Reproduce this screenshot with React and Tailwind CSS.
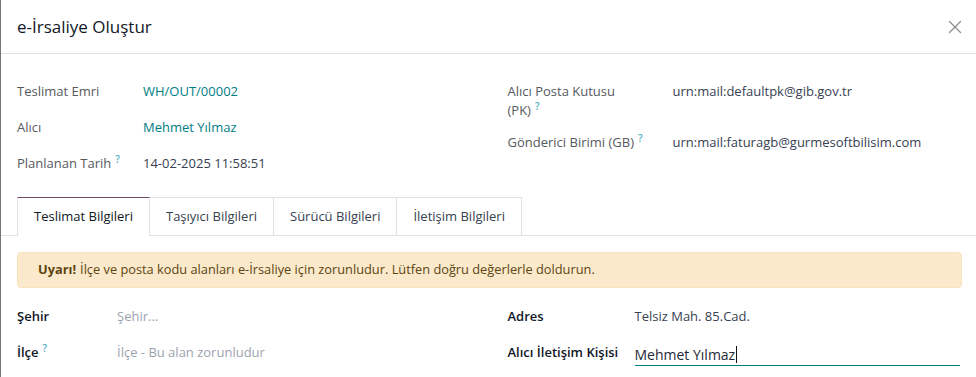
import { X } from "lucide-react"

const font = { fontFamily: '"Open Sans", "Noto Sans", sans-serif' }

function Help() {
    return <span className="relative -top-[5px] ml-[4px] text-[10px] leading-none font-semibold text-[#4fb0c0]">?</span>
}

function TopRow({ label, value, help, link, labelW }) {
    return (
        <div className="flex py-2 leading-[20px]">
            <div className={`${labelW} shrink-0 text-[#555a60]`}>
                {label}
                {help && <Help />}
            </div>
            <div className={link ? "text-[#017e84]" : "text-[#374151]"}>{value}</div>
        </div>
    )
}

const tabs = ["Teslimat Bilgileri", "Taşıyıcı Bilgileri", "Sürücü Bilgileri", "İletişim Bilgileri"]

export default function App() {
    return (
        <div className="h-[377px] w-full overflow-hidden border-l border-[#767676] bg-white text-[13px] text-[#374151]" style={font}>
            {/* Header */}
            <div className="flex h-[54px] items-center justify-between border-b border-[#dee2e6] pl-4 pr-[10px]">
                <h4 className="text-[17px] text-[#111827]">e-İrsaliye Oluştur</h4>
                <X size={22} strokeWidth={1.3} className="text-[#8a8a8a]" />
            </div>

            {/* Top fields */}
            <div className="grid grid-cols-2 gap-x-[38px] px-4 pt-[19px]">
                <div>
                    <TopRow label="Teslimat Emri" value="WH/OUT/00002" link labelW="w-[126px]" />
                    <TopRow label="Alıcı" value="Mehmet Yılmaz" link labelW="w-[126px]" />
                    <TopRow label="Planlanan Tarih" value="14-02-2025 11:58:51" help labelW="w-[126px]" />
                </div>
                <div>
                    <div className="flex pt-2 pb-1 leading-[20px]">
                        <div className="w-[165px] shrink-0 text-[#555a60]">
                            <div className="h-[19px]">Alıcı Posta Kutusu</div>
                            <div className="h-[20px]">
                                (PK)
                                <Help />
                            </div>
                        </div>
                        <div>urn:mail:defaultpk@gib.gov.tr</div>
                    </div>
                    <TopRow label="Gönderici Birimi (GB)" value="urn:mail:faturagb@gurmesoftbilisim.com" help labelW="w-[165px]" />
                </div>
            </div>

            {/* Tabs */}
            <div className="mt-4 flex border-b border-[#dee2e6] pl-4">
                {tabs.map((t, i) => (
                    <div
                        key={t}
                        className={
                            i === 0
                                ? "-mb-px flex h-[39px] items-center border-x border-t border-t-[#714b67] border-x-[#dee2e6] bg-white px-4 text-[#111827]"
                                : "flex h-[38px] items-center border-t border-r border-[#dee2e6] px-4 text-[#374151]"
                        }
                    >
                        {t}
                    </div>
                ))}
            </div>

            {/* Warning */}
            <div className="ml-4 mr-[14px] mt-4 flex h-9 items-center rounded border border-[#f9e3bd] bg-[#fbe9cc] px-5 text-[12.8px] text-[#5b4510]">
                <b className="mr-1">Uyarı!</b> İlçe ve posta kodu alanları e-İrsaliye için zorunludur. Lütfen doğru değerlerle doldurun.
            </div>

            {/* Bottom fields */}
            <div className="grid grid-cols-2 gap-x-[38px] px-4 pt-[11px]">
                <div>
                    <div className="flex h-9 items-center">
                        <div className="w-[100px] shrink-0 font-semibold text-[#111827]">Şehir</div>
                        <div className="text-[#9ca3af]">Şehir...</div>
                    </div>
                    <div className="flex h-9 items-center">
                        <div className="w-[100px] shrink-0 font-semibold text-[#111827]">
                            İlçe
                            <Help />
                        </div>
                        <div className="text-[#9ca3af]">İlçe - Bu alan zorunludur</div>
                    </div>
                </div>
                <div>
                    <div className="flex h-9 items-center">
                        <div className="w-[127px] shrink-0 font-semibold text-[#111827]">Adres</div>
                        <div>Telsiz Mah. 85.Cad.</div>
                    </div>
                    <div className="flex h-9 items-center">
                        <div className="w-[127px] shrink-0 font-semibold text-[#111827]">Alıcı İletişim Kişisi</div>
                        <div className="flex flex-1 items-center border-b border-[#017e84] pt-[3px] text-[14px] text-[#1f2937]">
                            Mehmet Yılmaz
                            <span className="ml-px inline-block h-[17px] w-px bg-[#111]"></span>
                        </div>
                    </div>
                </div>
            </div>
        </div>
    )
}
